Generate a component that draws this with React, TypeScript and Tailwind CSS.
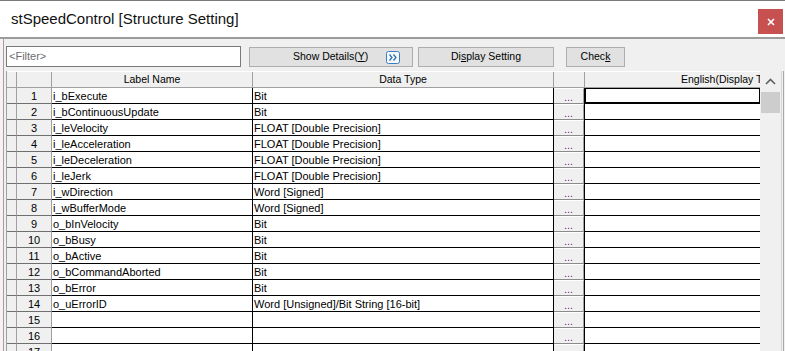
import React from 'react';

const FLOAT = 'FLOAT [Double Precision]';

const rows: [string, string][] = [
  ['i_bExecute', 'Bit'],
  ['i_bContinuousUpdate', 'Bit'],
  ['i_leVelocity', FLOAT],
  ['i_leAcceleration', FLOAT],
  ['i_leDeceleration', FLOAT],
  ['i_leJerk', FLOAT],
  ['i_wDirection', 'Word [Signed]'],
  ['i_wBufferMode', 'Word [Signed]'],
  ['o_bInVelocity', 'Bit'],
  ['o_bBusy', 'Bit'],
  ['o_bActive', 'Bit'],
  ['o_bCommandAborted', 'Bit'],
  ['o_bError', 'Bit'],
  ['o_uErrorID', 'Word [Unsigned]/Bit String [16-bit]'],
  ['', ''],
  ['', ''],
  ['', ''],
];

function ExpandIcon() {
  return (
    <svg width="14" height="13" viewBox="0 0 14 13" className="ml-[18px]">
      <rect x="0.5" y="0.5" width="13" height="12" rx="2" fill="#f4f9fe" stroke="#3c7bbf" />
      <path d="M3.5 3.5 L6 6.5 L3.5 9.5 M7.5 3.5 L10 6.5 L7.5 9.5" fill="none" stroke="#2f6db3" strokeWidth="1.3" />
    </svg>
  );
}

function Button({ width, children }: { width: string; children: React.ReactNode }) {
  return (
    <div className={`${width} h-[20px] mt-[1px] flex items-center justify-center bg-[#e1e1e1] border border-[#adadad] text-[10.5px] text-black`}>
      {children}
    </div>
  );
}

export default function App() {
  return (
    <div className="w-[785px] h-[351px] overflow-hidden bg-white flex flex-col font-['Liberation_Sans',Arial,sans-serif] text-black">
      {/* title bar */}
      <div className="h-[37px] shrink-0 flex justify-between items-start border-t border-[#7a7a7a]">
        <div className="pl-[11px] pt-[8px] text-[15px] leading-[20px] text-[#111]">stSpeedControl [Structure Setting]</div>
        <div className="w-[25px] h-[25px] mt-[8px] mr-[2px] bg-[#c75050] flex items-center justify-center">
          <svg width="8" height="8" viewBox="0 0 8 8">
            <path d="M1 1 L7 7 M7 1 L1 7" stroke="white" strokeWidth="1.6" />
          </svg>
        </div>
      </div>

      <div className="flex-1 flex border-t-2 border-[#9c9c9c] min-h-0">
        <div className="w-[3px] bg-[#f7f1f6] shrink-0" />
        <div className="flex-1 flex flex-col bg-[#f0f0f0] border-l border-[#a0a0a0] min-h-0">
          {/* toolbar */}
          <div className="h-[32px] shrink-0 flex items-start pl-[2px] pt-[7px]">
            <div className="w-[235px] h-[21px] bg-white border border-[#7a7a7a] text-[11px] text-[#6d6d6d] pl-[2px] leading-[19px]">
              &lt;Filter&gt;
            </div>
            <div className="ml-[8px] w-[164px] h-[20px] mt-[1px] flex items-center bg-[#e1e1e1] border border-[#adadad] text-[10.5px]">
              <span className="ml-[43px]">
                Show Details(<span className="underline">Y</span>)
              </span>
              <ExpandIcon />
            </div>
            <div className="ml-[5px]">
              <Button width="w-[136px]">
                <span>
                  Di<span className="underline">s</span>play Setting
                </span>
              </Button>
            </div>
            <div className="ml-[12px]">
              <Button width="w-[59px]">
                <span>
                  Chec<span className="underline">k</span>
                </span>
              </Button>
            </div>
          </div>

          {/* grid */}
          <div className="flex-1 flex min-h-0 pl-[2px]">
            <div className="w-[754px] shrink-0 flex flex-col border-l border-[#a0a0a0] overflow-hidden">
              <div className="h-[17px] shrink-0 flex border-b border-[#a0a0a0] border-t border-t-white text-[10.5px] leading-[15px]">
                <div className="w-[10px] border-r border-[#a0a0a0]" />
                <div className="w-[35px] border-r border-[#a0a0a0]" />
                <div className="w-[201px] border-r border-[#a0a0a0] text-center">Label Name</div>
                <div className="w-[301px] border-r border-[#a0a0a0] text-center">Data Type</div>
                <div className="w-[31px] border-r border-[#a0a0a0]" />
                <div className="w-[175px] overflow-hidden whitespace-nowrap pl-[96px]">English(Display Text)</div>
              </div>
              {rows.map(([label, type], i) => (
                <div key={i} className="h-[16px] shrink-0 flex text-[11px] leading-[15px]">
                  <div className="w-[10px] border-r border-r-[#a0a0a0] border-b border-b-[#6f6f6f]" />
                  <div className="w-[35px] border-r border-r-[#a0a0a0] border-b border-b-[#6f6f6f] text-center pt-[1px]">{i + 1}</div>
                  <div className="w-[201px] border-r border-black border-b pl-[1px] pt-[1px] bg-white whitespace-nowrap">{label}</div>
                  <div className="w-[301px] border-r border-black border-b pl-[1px] pt-[1px] bg-white whitespace-nowrap">{type}</div>
                  <div className="w-[31px] border-r border-r-black flex">
                    <div className="flex-1 bg-[#f0f0f0] border-t border-t-white border-b border-b-[#8a8a8a] border-r border-r-[#a0a0a0] text-center text-[#7a1a8a] pt-[1px] leading-[14px]">
                      ...
                    </div>
                  </div>
                  <div className="w-[175px] bg-white border-b border-black">
                    {i === 0 && <div className="h-full border border-black" />}
                  </div>
                </div>
              ))}
            </div>

            {/* scrollbar */}
            <div className="w-[20px] shrink-0 bg-[#f0f0f0] flex flex-col items-center">
              <div className="h-[19px] w-full flex items-center justify-center pt-[2px]">
                <svg width="11" height="7" viewBox="0 0 11 7">
                  <path d="M1 6 L5.5 1.5 L10 6" fill="none" stroke="#606060" strokeWidth="1.6" />
                </svg>
              </div>
              <div className="mt-[2px] w-[19px] h-[21px] bg-[#cdcdcd]" />
            </div>
            <div className="w-[5px] shrink-0 flex">
              <div className="w-[1px] bg-[#f0f0f0]" />
              <div className="w-[1px] bg-[#d6d6d6]" />
              <div className="w-[1px] bg-[#f0f0f0]" />
              <div className="w-[1px] bg-[#a8a8a8]" />
              <div className="w-[1px] bg-[#f0f0f0]" />
            </div>
          </div>
        </div>
      </div>
    </div>
  );
}
